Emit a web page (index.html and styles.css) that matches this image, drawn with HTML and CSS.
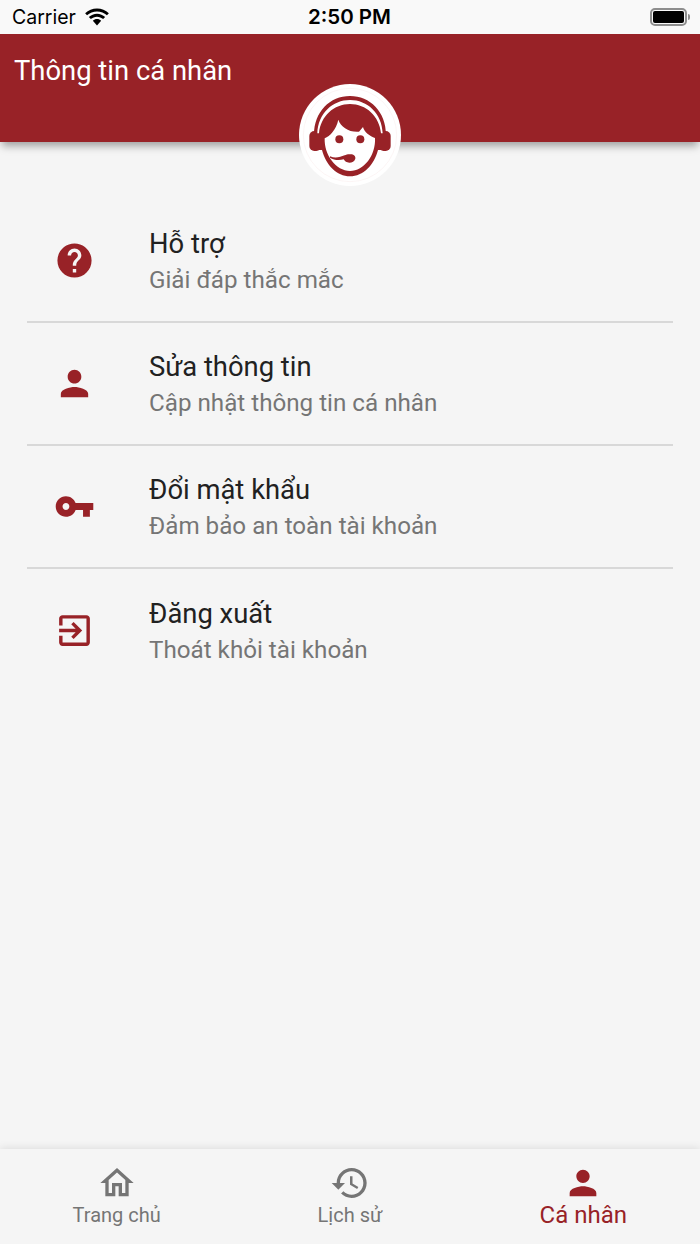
FILE: index.html
```html
<!DOCTYPE html>
<html lang="vi">
<head>
<meta charset="utf-8">
<title>Thông tin cá nhân</title>
<link rel="stylesheet" href="styles.css">
</head>
<body>
<div class="app">
  <div class="status">
    <div class="status-left">
      <span class="carrier">Carrier</span>
      <svg class="wifi" viewBox="1.500 0 23 17"><path d="M13 3.200c3.600 0 6.900 1.400 9.400 3.700l1.800-1.900C21.200 2.200 17.300.5 13 .5S4.800 2.200 1.800 5l1.800 1.900C6.100 4.600 9.400 3.200 13 3.200z"/><path d="M13 8.200c2.200 0 4.300.9 5.800 2.300l1.900-1.900C18.600 6.700 15.900 5.500 13 5.500S7.400 6.700 5.300 8.600l1.900 1.900C8.700 9.100 10.800 8.200 13 8.200z"/><path d="M13 10.500c-1.500 0-2.900.6-3.900 1.600L13 16.500l3.900-4.400c-1-1-2.400-1.600-3.900-1.600z"/></svg>
    </div>
    <span class="time">2:50 PM</span>
    <div class="battery"><span class="battery-level"></span></div>
  </div>

  <header class="header">
    <h1 class="header-title">Thông tin cá nhân</h1>
    <div class="avatar">
      <svg class="avatar-art" viewBox="27 12 306 306">
        <circle cx="180" cy="165" r="153" fill="#fff"/>
        <circle cx="180" cy="165" r="140" fill="none" stroke="#fbf0f0" stroke-width="2"/>
        <path class="ink" d="M72 165C72 95 120 48 180 48s108 47 108 117l-12 45H264C252 255 220 289 180 289S108 255 96 210H84z"/>
        <rect class="ink" x="58" y="153" width="36" height="60" rx="15"/>
        <rect class="ink" x="266" y="153" width="36" height="60" rx="15"/>
        <path d="M82 160C84 100 128 60 180 60s96 40 98 100l-5 0C268 108 228 72 180 72S92 108 87 160z" fill="#fff"/>
        <path d="M104 175C120 168 138 150 145 119C152 140 178 158 207 155L219 141C222 156 240 168 255 174C258 225 222 273 180 273C138 273 102 225 104 175z" fill="#fff"/>
        <circle class="ink" cx="148" cy="178" r="12"/>
        <circle class="ink" cx="211" cy="178" r="12"/>
        <path class="ink" d="M120 229C135 236 150 232 164 226C170 222 178 222 186 223C194 225 197 231 196 236C194 244 186 248 178 248C170 248 164 244 161 238C148 241 132 241 120 233z"/>
      </svg>
    </div>
  </header>

  <main class="menu">
    <div class="row">
      <div class="row-icon"><svg viewBox="0 0 24 24"><path d="M12 2C6.480 2 2 6.480 2 12s4.480 10 10 10 10-4.480 10-10S17.520 2 12 2zm1 17h-2v-2h2v2zm2.070-7.750l-.9.920C13.450 12.900 13 13.500 13 15h-2v-.5c0-1.100.45-2.100 1.170-2.830l1.240-1.260c.37-.36.59-.86.59-1.410 0-1.100-.9-2-2-2s-2 .9-2 2H8c0-2.210 1.790-4 4-4s4 1.790 4 4c0 .88-.36 1.680-.93 2.250z"/></svg></div>
      <div class="row-text"><div class="row-title">Hỗ trợ</div><div class="row-sub">Giải đáp thắc mắc</div></div>
    </div>
    <div class="row">
      <div class="row-icon"><svg viewBox="0 0 24 24"><path d="M12 12c2.210 0 4-1.790 4-4s-1.790-4-4-4-4 1.790-4 4 1.790 4 4 4zm0 2c-2.670 0-8 1.340-8 4v2h16v-2c0-2.660-5.330-4-8-4z"/></svg></div>
      <div class="row-text"><div class="row-title">Sửa thông tin</div><div class="row-sub">Cập nhật thông tin cá nhân</div></div>
    </div>
    <div class="row">
      <div class="row-icon"><svg viewBox="0 0 24 24"><path d="M12.650 10C11.830 7.670 9.610 6 7 6c-3.310 0-6 2.690-6 6s2.690 6 6 6c2.610 0 4.830-1.670 5.650-4H17v4h4v-4h2v-4H12.650zM7 14c-1.100 0-2-.9-2-2s.9-2 2-2 2 .9 2 2-.9 2-2 2z"/></svg></div>
      <div class="row-text"><div class="row-title">Đổi mật khẩu</div><div class="row-sub">Đảm bảo an toàn tài khoản</div></div>
    </div>
    <div class="row">
      <div class="row-icon"><svg viewBox="0 0 24 24"><path d="M10.090 15.590L11.500 17l5-5-5-5-1.410 1.410L12.670 11H3v2h9.670l-2.580 2.590zM19 3H5c-1.110 0-2 .9-2 2v4h2V5h14v14H5v-4H3v4c0 1.100.89 2 2 2h14c1.100 0 2-.9 2-2V5c0-1.100-.9-2-2-2z"/></svg></div>
      <div class="row-text"><div class="row-title">Đăng xuất</div><div class="row-sub">Thoát khỏi tài khoản</div></div>
    </div>
  </main>

  <nav class="tabs">
    <div class="tab">
      <svg viewBox="0 0 24 24"><path d="M12 5.690l5 4.500V18h-2v-6H9v6H7v-7.810l5-4.500M12 3L2 12h3v8h6v-6h2v6h6v-8h3L12 3z"/></svg>
      <span class="tab-label">Trang chủ</span>
    </div>
    <div class="tab">
      <svg viewBox="0 0 24 24"><path d="M13 3c-4.970 0-9 4.030-9 9H1l3.890 3.890.07.14L9 12H6c0-3.870 3.130-7 7-7s7 3.130 7 7-3.130 7-7 7c-1.930 0-3.680-.79-4.940-2.060l-1.420 1.420C8.270 19.990 10.510 21 13 21c4.970 0 9-4.030 9-9s-4.030-9-9-9zm-1 5v5l4.280 2.540.72-1.210-3.500-2.080V8H12z"/></svg>
      <span class="tab-label">Lịch sử</span>
    </div>
    <div class="tab tab-active">
      <svg viewBox="0 0 24 24"><path d="M12 12c2.210 0 4-1.790 4-4s-1.790-4-4-4-4 1.790-4 4 1.790 4 4 4zm0 2c-2.670 0-8 1.340-8 4v2h16v-2c0-2.660-5.330-4-8-4z"/></svg>
      <span class="tab-label">Cá nhân</span>
    </div>
  </nav>
</div>
</body>
</html>
```

FILE: styles.css
```css
* { box-sizing: border-box; }
html, body { margin: 0; padding: 0; }
body { font-family: Roboto, "Noto Sans", sans-serif; background: #f5f5f5; }
.app { width: 700px; height: 1244px; display: flex; flex-direction: column; overflow: hidden; }

.status { height: 34px; flex: none; background: #f9f9f9; display: grid; grid-template-columns: 1fr auto 1fr; align-items: center; padding: 0 13px 0 12px; color: #000; position: relative; z-index: 3; }
.status-left { display: flex; align-items: center; gap: 8px; }
.carrier { font-family: Inter, "Liberation Sans", sans-serif; font-size: 19.500px; line-height: 34px; }
.wifi { width: 26px; height: 18px; fill: #000; }
.time { font-family: Inter, "Liberation Sans", sans-serif; font-size: 20.500px; font-weight: 600; line-height: 34px; }
.battery { justify-self: end; width: 37px; height: 18px; border: 2px solid #8e8e8e; border-radius: 5px; padding: 1px; position: relative; }
.battery::after { content: ""; position: absolute; right: -5px; top: 4px; width: 2px; height: 6px; background: #8e8e8e; border-radius: 0 2px 2px 0; }
.battery-level { display: block; height: 100%; background: #000; border-radius: 2px; }

.header { height: 108px; flex: none; background: #982227; box-shadow: 0 6px 8px -2px rgba(0,0,0,.35); position: relative; z-index: 2; padding: 19px 14px 0; }
.header-title { margin: 0; color: #fff; font-size: 27.400px; font-weight: 400; line-height: 36px; }
.avatar { position: absolute; left: 299px; top: 50px; width: 102px; height: 102px; }
.avatar-art { display: block; width: 102px; height: 102px; }
.ink { fill: #982227; }

.menu { flex: 1; padding: 58px 27px 0; }
.row { height: 123px; display: flex; align-items: center; border-bottom: 2px solid #d8d8d8; }
.row:last-child { border-bottom: 0; }
.row-icon { width: 95px; flex: none; display: flex; justify-content: center; }
.row-icon svg { width: 41px; height: 41px; fill: #982227; display: block; }
.row-text { margin: 2px 0 0 27px; }
.row-title { font-size: 27.400px; line-height: 36px; color: #212121; }
.row-sub { font-size: 24.200px; line-height: 36px; color: #757575; }

.tabs { height: 95px; flex: none; display: flex; background: #f5f5f5; box-shadow: 0 -1px 8px rgba(0,0,0,.1); position: relative; }
.tab { flex: 1; display: flex; flex-direction: column; align-items: center; padding-top: 14px; color: #757575; }
.tab svg { width: 40px; height: 40px; fill: currentColor; display: block; }
.tab-label { font-size: 20px; line-height: 24px; }
.tab-active { color: #982227; }
.tab-active .tab-label { font-size: 24px; }
```
